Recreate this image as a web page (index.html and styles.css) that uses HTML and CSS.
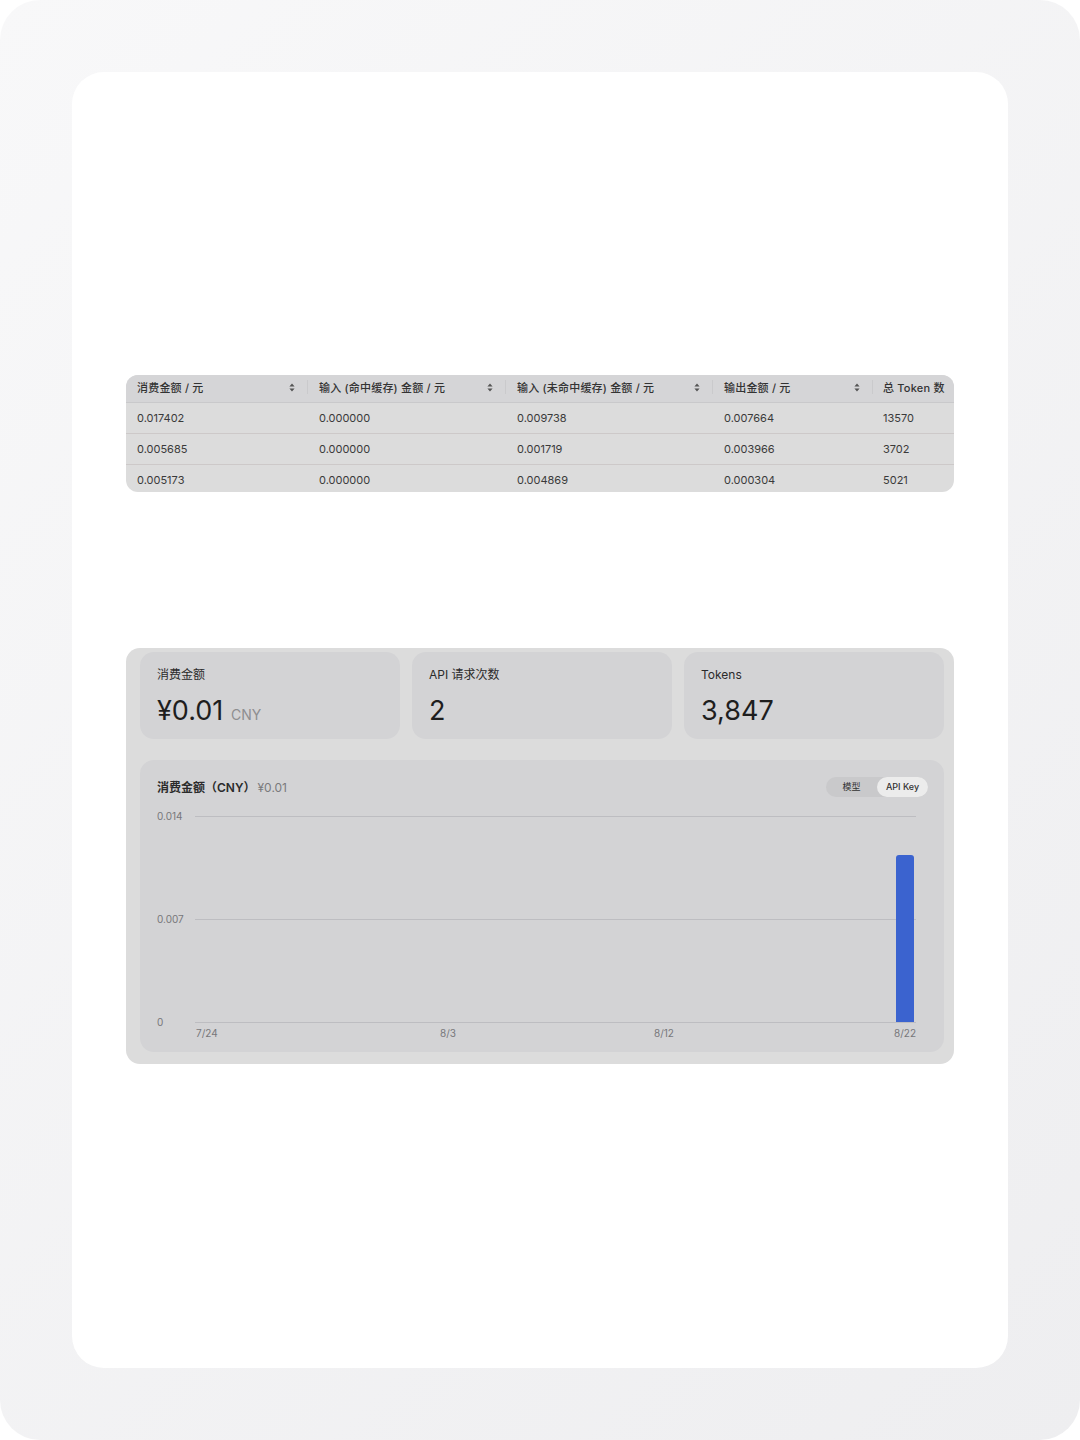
FILE: index.html
```html
<!DOCTYPE html>
<html lang="zh-CN">
<head>
    <meta charset="UTF-8">
    <meta name="viewport" content="width=device-width, initial-scale=1.0">
    <title>用量信息</title>
    <link rel="stylesheet" href="styles.css">
</head>
<body>
    <div class="frame">
        <div class="sheet">
            <div class="table-wrap">
                <table class="usage-table">
                    <colgroup>
                        <col style="width:182px">
                        <col style="width:198px">
                        <col style="width:207px">
                        <col style="width:160px">
                        <col>
                    </colgroup>
                    <thead>
                        <tr>
                            <th><div class="th-inner"><span>消费金额 / 元</span><svg class="sort" width="6" height="9" viewBox="0 0 6 9"><path d="M3 0.5 L5.6 3.4 H0.4 Z M3 8.5 L5.6 5.6 H0.4 Z" fill="#555"/></svg></div></th>
                            <th><div class="th-inner"><span>输入 (命中缓存) 金额 / 元</span><svg class="sort" width="6" height="9" viewBox="0 0 6 9"><path d="M3 0.5 L5.6 3.4 H0.4 Z M3 8.5 L5.6 5.6 H0.4 Z" fill="#555"/></svg></div></th>
                            <th><div class="th-inner"><span>输入 (未命中缓存) 金额 / 元</span><svg class="sort" width="6" height="9" viewBox="0 0 6 9"><path d="M3 0.5 L5.6 3.4 H0.4 Z M3 8.5 L5.6 5.6 H0.4 Z" fill="#555"/></svg></div></th>
                            <th><div class="th-inner"><span>输出金额 / 元</span><svg class="sort" width="6" height="9" viewBox="0 0 6 9"><path d="M3 0.5 L5.6 3.4 H0.4 Z M3 8.5 L5.6 5.6 H0.4 Z" fill="#555"/></svg></div></th>
                            <th><div class="th-inner"><span>总 Token 数</span></div></th>
                        </tr>
                    </thead>
                    <tbody>
                        <tr><td>0.017402</td><td>0.000000</td><td>0.009738</td><td>0.007664</td><td>13570</td></tr>
                        <tr><td>0.005685</td><td>0.000000</td><td>0.001719</td><td>0.003966</td><td>3702</td></tr>
                        <tr><td>0.005173</td><td>0.000000</td><td>0.004869</td><td>0.000304</td><td>5021</td></tr>
                    </tbody>
                </table>
            </div>

            <div class="stats-panel">
                <div class="stat-row">
                    <div class="stat-card">
                        <div class="stat-label">消费金额</div>
                        <div class="stat-value">¥0.01 <span class="unit">CNY</span></div>
                    </div>
                    <div class="stat-card">
                        <div class="stat-label">API 请求次数</div>
                        <div class="stat-value">2</div>
                    </div>
                    <div class="stat-card">
                        <div class="stat-label">Tokens</div>
                        <div class="stat-value">3,847</div>
                    </div>
                </div>

                <div class="chart-card">
                    <div class="chart-head">
                        <div class="chart-title">消费金额（CNY）<span class="chart-total">¥0.01</span></div>
                        <div class="toggle">
                            <span class="toggle-item">模型</span>
                            <span class="toggle-item active">API Key</span>
                        </div>
                    </div>
                    <svg class="chart" width="787" height="240" viewBox="0 0 787 240">
                        <g stroke="#bdbdc1" stroke-width="1">
                            <line x1="38" y1="11.5" x2="759" y2="11.5"/>
                            <line x1="38" y1="114.5" x2="759" y2="114.5"/>
                            <line x1="38" y1="217.5" x2="759" y2="217.5"/>
                        </g>
                        <g class="axis-label">
                            <text x="0" y="15">0.014</text>
                            <text x="0" y="118">0.007</text>
                            <text x="0" y="221">0</text>
                            <text x="39" y="232">7/24</text>
                            <text x="283" y="232">8/3</text>
                            <text x="497" y="232">8/12</text>
                            <text x="759" y="232" text-anchor="end">8/22</text>
                        </g>
                        <path d="M739 53 a3 3 0 0 1 3 -3 h12 a3 3 0 0 1 3 3 V217 H739 Z" fill="#3b63cf"/>
                    </svg>
                </div>
            </div>
        </div>
    </div>
</body>
</html>
```

FILE: styles.css
```css
body {
    margin: 0;
    background: #ffffff;
    font-family: "Inter", "Noto Sans CJK SC", sans-serif;
    color: #222;
}

.frame {
    width: 1080px;
    height: 1440px;
    box-sizing: border-box;
    padding: 72px;
    border-radius: 40px;
    background: linear-gradient(135deg, #f8f8f9, #eeeef0);
}

.sheet {
    height: 1296px;
    box-sizing: border-box;
    background: #fff;
    border-radius: 32px;
    padding: 303px 54px 0;
}

/* table */
.table-wrap {
    border-radius: 12px;
    overflow: hidden;
    background: #dcdcdc;
    height: 117px;
}
.usage-table {
    width: 100%;
    border-collapse: collapse;
    table-layout: fixed;
    font-size: 11px;
    color: #3a3a3a;
}
.usage-table th {
    background: #d5d5d7;
    height: 24px;
    padding: 0 0 3px;
    font-weight: 500;
    text-align: left;
    color: #333;
    white-space: nowrap;
    border-bottom: 1px solid #c9c9cb;
}
.th-inner {
    display: flex;
    align-items: center;
    justify-content: space-between;
    padding: 0 12px 0 11px;
    border-right: 1px solid #cacacc;
    height: 14px;
    letter-spacing: 0.2px;
}
.usage-table th:last-child .th-inner {
    border-right: none;
    padding: 0 0 0 10px;
}
.sort {
    flex: none;
}
.usage-table td {
    height: 30px;
    padding: 0 0 0 11px;
    border-bottom: 1px solid #cdc9c9;
}
.usage-table td:last-child {
    padding-left: 10px;
}
.usage-table tr:last-child td {
    border-bottom: none;
}

/* stats */
.stats-panel {
    margin-top: 156px;
    height: 416px;
    box-sizing: border-box;
    background: #dcdcdc;
    border-radius: 14px;
    padding: 4px 10px 12px 14px;
    display: flex;
    flex-direction: column;
    gap: 21px;
}
.stat-row {
    display: flex;
    gap: 12px;
}
.stat-card {
    width: 260px;
    height: 87px;
    box-sizing: border-box;
    background: #d3d3d5;
    border-radius: 14px;
    padding: 15px 17px 0;
}
.stat-label {
    font-size: 12px;
    color: #2b2b2b;
    line-height: 16px;
}
.stat-value {
    margin-top: 10px;
    font-size: 27px;
    line-height: 36px;
    color: #1e1e1e;
}
.unit {
    font-size: 14px;
    color: #8e8e90;
}

.chart-card {
    flex: 1;
    background: #d3d3d5;
    border-radius: 14px;
    padding: 16px 16px 0 17px;
}
.chart-head {
    display: flex;
    justify-content: space-between;
    align-items: center;
    height: 20px;
}
.chart-title {
    font-size: 12px;
    font-weight: 600;
    color: #2b2b2b;
}
.chart-total {
    font-weight: 400;
    color: #7a7a7c;
    margin-left: 2px;
}
.toggle {
    display: flex;
    background: #c9c9cb;
    border-radius: 10px;
    height: 20px;
    font-size: 9px;
    color: #333;
    margin-top: 1px;
}
.toggle-item {
    display: flex;
    align-items: center;
    justify-content: center;
    width: 51px;
    border-radius: 10px;
}
.toggle-item.active {
    background: #ececec;
    font-weight: 500;
}
.chart {
    display: block;
    margin-top: 9px;
}
.axis-label {
    font-size: 10px;
    fill: #77777a;
    font-family: "Inter", sans-serif;
}
```
